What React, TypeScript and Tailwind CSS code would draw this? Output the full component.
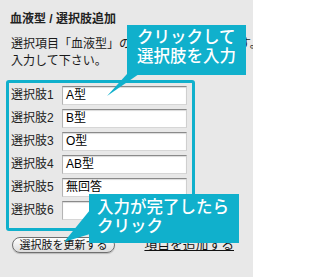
import React from 'react';

const choices = ['A型', 'B型', 'O型', 'AB型', '無回答', ''];

function Callout({ className, lines }: { className: string; lines: string[] }) {
	return (
		<div className={`absolute bg-[#10b0cc] text-white text-[16.5px] leading-[19px] font-medium ${className}`}>
			{lines.map((line) => (
				<div key={line}>{line}</div>
			))}
		</div>
	);
}

export default function App() {
	return (
		<div
			className="relative w-[253px] h-[277px] overflow-hidden bg-[#e8e8e8] text-[#1a1a1a]"
			style={{ fontFamily: '"Liberation Sans", "Noto Sans CJK JP", sans-serif' }}
		>
			{/* Heading */}
			<h2 className="pt-[11px] pl-[10px] text-[12px] leading-[17px] font-bold text-[#222]">
				血液型 / 選択肢追加
			</h2>

			{/* Description (runs on under the callout) */}
			<p className="mt-[8px] pl-[11px] text-[12px] leading-[17px] whitespace-nowrap">
				選択項目「血液型」の選択肢を追加できます。
				<br />
				入力して下さい。
			</p>

			{/* Highlighted choice list */}
			<div className="mt-[10px] ml-[6px] w-[189px] border-[3px] border-[#10b0cc] rounded-[3px] pt-[3px] pb-[8px] pl-[2px] flex flex-col gap-[4px]">
				{choices.map((value, i) => (
					<div key={i} className="flex items-center h-[19px]">
						<span className="w-[51px] text-[12px] leading-[19px] text-[#222]">選択肢{i + 1}</span>
						<div className="w-[125px] h-[19px] bg-white border border-t-[#8a8a8a] border-l-[#b4b4b4] border-r-[#cfcfcf] border-b-[#d6d6d6] shadow-[inset_0_1px_1px_rgba(0,0,0,0.15)] pl-[3px] text-[12px] leading-[17px] text-black">
							{value}
						</div>
					</div>
				))}
			</div>

			{/* Actions */}
			<div className="mt-[6px] flex items-center">
				<button className="ml-[12px] w-[103px] h-[16px] rounded-full border border-[#6f6f6f] bg-gradient-to-b from-white to-[#dcdcdc] text-[11px] leading-[14px] text-[#111] shadow-[0_1px_1px_rgba(0,0,0,0.2)]">
					選択肢を更新する
				</button>
				<a href="#" className="ml-auto mr-[19px] text-[12.8px] leading-[16px] text-[#111] underline">
					項目を追加する
				</a>
			</div>

			{/* Callout pointers */}
			<svg className="absolute left-0 top-0" width="253" height="277">
				<polygon points="127,74 139,74 107,96" fill="#10b0cc" />
				<polygon points="90,210 90,234 64,242" fill="#10b0cc" />
			</svg>
			<Callout className="left-[127px] top-[25px] w-[119px] h-[50px] pl-[10px] pt-[3px]" lines={['クリックして', '選択肢を入力']} />
			<Callout
				className="left-[89px] top-[194px] w-[150px] h-[49px] pl-[8px] pt-[4px]"
				lines={['入力が完了したら', 'クリック']}
			/>
		</div>
	);
}
